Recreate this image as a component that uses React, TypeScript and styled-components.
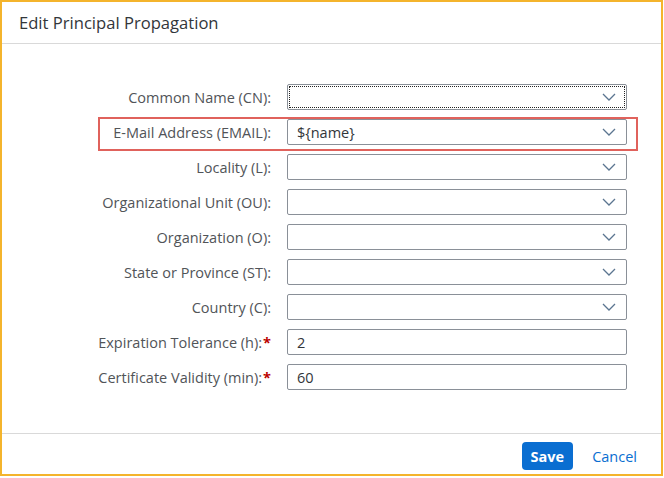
import React from 'react';
import styled, { createGlobalStyle } from 'styled-components';

const Global = createGlobalStyle`
  html, body {
    margin: 0;
    padding: 0;
    background: #fff;
    font-family: "Open Sans", "Noto Sans", Arial, sans-serif;
  }
`;

const Frame = styled.div`
  width: 663px;
  height: 476px;
  box-sizing: border-box;
  border: 2px solid #f4b42c;
  display: flex;
  flex-direction: column;
  background: #fff;
`;

const Header = styled.div`
  height: 42px;
  box-sizing: border-box;
  border-bottom: 1px solid #d9d9d9;
  display: flex;
  align-items: center;
  padding-left: 17px;
  font-size: 16.6px;
  color: #32363a;
`;

const Body = styled.div`
  flex: 1;
  padding-top: 40px;
`;

const Form = styled.div`
  position: relative;
  display: grid;
  grid-template-columns: 269px 340px;
  grid-auto-rows: 26px;
  column-gap: 16px;
  row-gap: 9px;
`;

const Label = styled.label`
  display: flex;
  align-items: center;
  justify-content: flex-end;
  font-size: 14.5px;
  color: #515458;
  white-space: nowrap;
`;

const Star = styled.span`
  color: #bb0000;
  font-weight: bold;
  margin-left: 1px;
`;

const Field = styled.div<{ $focused?: boolean }>`
  display: flex;
  align-items: center;
  justify-content: space-between;
  box-sizing: border-box;
  border: 1px solid #8a9098;
  border-radius: 2px;
  padding: 0 10px 0 9px;
  font-size: 14.5px;
  color: #32363a;
  background: #fff;
  outline: ${({ $focused }) => ($focused ? '1px dotted #222' : 'none')};
  outline-offset: -3px;
`;

const Highlight = styled.div`
  position: absolute;
  left: 96px;
  top: 33px;
  width: 540px;
  height: 34px;
  box-sizing: border-box;
  border: 2px solid #e0625c;
  pointer-events: none;
`;

const Footer = styled.div`
  height: 41px;
  box-sizing: border-box;
  border-top: 1px solid #d9d9d9;
  display: flex;
  align-items: center;
  justify-content: flex-end;
  padding: 4px 16px 0 0;
  gap: 11px;
`;

const Button = styled.button<{ $primary?: boolean }>`
  height: 28px;
  box-sizing: border-box;
  border-radius: 4px;
  border: none;
  font-family: inherit;
  font-size: 14.5px;
  padding: 0 ${({ $primary }) => ($primary ? '9px' : '8px')};
  background: ${({ $primary }) => ($primary ? '#0a6ed1' : 'transparent')};
  color: ${({ $primary }) => ($primary ? '#fff' : '#0a6ed1')};
  font-weight: ${({ $primary }) => ($primary ? 700 : 400)};
`;

const Chevron = () => (
  <svg width="14" height="8" viewBox="0 0 14 8">
    <path d="M1 1 L7 7 L13 1" fill="none" stroke="#5b7590" strokeWidth="1.3" />
  </svg>
);

type Row = { label: string; value?: string; select?: boolean; required?: boolean; focused?: boolean };

const rows: Row[] = [
  { label: 'Common Name (CN):', select: true, focused: true },
  { label: 'E-Mail Address (EMAIL):', value: '${name}', select: true },
  { label: 'Locality (L):', select: true },
  { label: 'Organizational Unit (OU):', select: true },
  { label: 'Organization (O):', select: true },
  { label: 'State or Province (ST):', select: true },
  { label: 'Country (C):', select: true },
  { label: 'Expiration Tolerance (h):', value: '2', required: true },
  { label: 'Certificate Validity (min):', value: '60', required: true },
];

export default function App() {
  return (
    <>
      <Global />
      <Frame>
        <Header>Edit Principal Propagation</Header>
        <Body>
          <Form>
            {rows.map((r) => (
              <React.Fragment key={r.label}>
                <Label>
                  {r.label}
                  {r.required && <Star>*</Star>}
                </Label>
                <Field $focused={r.focused}>
                  <span>{r.value}</span>
                  {r.select && <Chevron />}
                </Field>
              </React.Fragment>
            ))}
            <Highlight />
          </Form>
        </Body>
        <Footer>
          <Button $primary>Save</Button>
          <Button>Cancel</Button>
        </Footer>
      </Frame>
    </>
  );
}
